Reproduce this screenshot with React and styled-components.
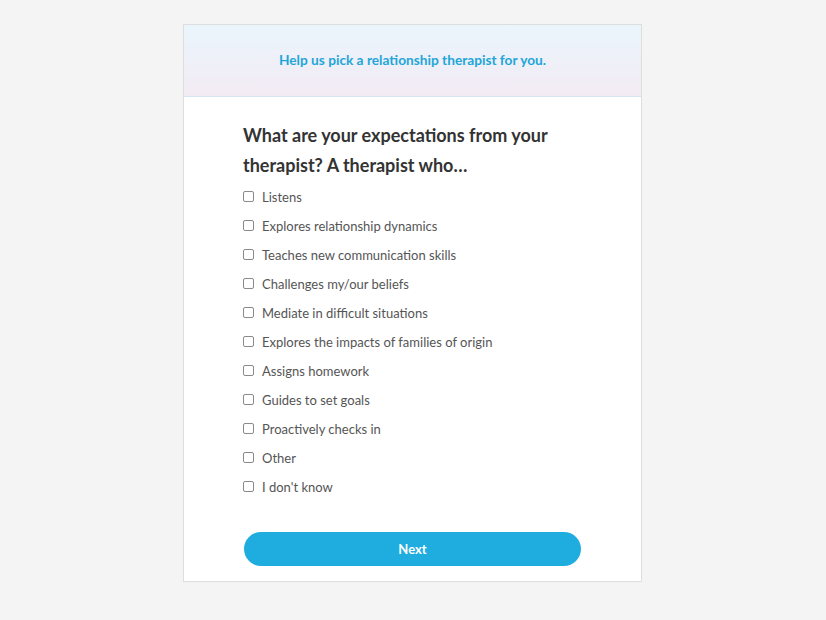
import React from "react";
import styled, { createGlobalStyle } from "styled-components";

const GlobalStyle = createGlobalStyle`
  html, body {
    margin: 0;
    padding: 0;
    background: #f4f4f4;
    font-family: Lato, "Noto Sans", sans-serif;
  }
`;

const Page = styled.div`
  min-height: 620px;
  display: flex;
  justify-content: center;
  padding-top: 24px;
  padding-right: 1px;
  box-sizing: border-box;
`;

const Card = styled.div`
  width: 459px;
  height: 558px;
  box-sizing: border-box;
  background: #fff;
  border: 1px solid #dedede;
  display: flex;
  flex-direction: column;
`;

const Header = styled.div`
  height: 72px;
  box-sizing: border-box;
  padding-bottom: 3px;
  background: linear-gradient(180deg, #eaf5fc 0%, #f3ebf4 100%);
  border-bottom: 1px solid #d6e6f0;
  display: flex;
  align-items: center;
  justify-content: center;
`;

const HeaderTitle = styled.h1`
  margin: 0;
  font-size: 13.7px;
  font-weight: 700;
  color: #1fa6d8;
`;

const Body = styled.div`
  padding: 23px 60px 15px 59px;
  display: flex;
  flex-direction: column;
  flex: 1;
`;

const Question = styled.h2`
  margin: 0 0 2px;
  font-size: 18px;
  line-height: 30px;
  font-weight: 700;
  color: #333;
`;

const Options = styled.div`
  display: flex;
  flex-direction: column;
`;

const Option = styled.label`
  display: flex;
  align-items: center;
  gap: 8px;
  height: 29px;
  font-size: 13px;
  color: #555;
  cursor: pointer;
`;

const Box = styled.input`
  appearance: none;
  margin: 0;
  width: 11px;
  height: 11px;
  border: 1px solid #8a8a8a;
  border-radius: 2px;
  background: #fff;
  &:checked {
    background: #1fadde;
    border-color: #1fadde;
  }
`;

const Next = styled.button`
  margin-top: auto;
  margin-left: 1px;
  height: 34px;
  border: none;
  border-radius: 17px;
  background: #1fade0;
  color: #fff;
  font-family: inherit;
  font-size: 13px;
  font-weight: 700;
  cursor: pointer;
`;

const options = [
  "Listens",
  "Explores relationship dynamics",
  "Teaches new communication skills",
  "Challenges my/our beliefs",
  "Mediate in difficult situations",
  "Explores the impacts of families of origin",
  "Assigns homework",
  "Guides to set goals",
  "Proactively checks in",
  "Other",
  "I don't know",
];

function App() {
  return (
    <>
      <GlobalStyle />
      <Page>
        <Card>
          <Header>
            <HeaderTitle>Help us pick a relationship therapist for you.</HeaderTitle>
          </Header>
          <Body>
            <Question>
              What are your expectations from your therapist? A therapist who…
            </Question>
            <Options>
              {options.map((text) => (
                <Option key={text}>
                  <Box type="checkbox" />
                  {text}
                </Option>
              ))}
            </Options>
            <Next>Next</Next>
          </Body>
        </Card>
      </Page>
    </>
  );
}

export default App;
